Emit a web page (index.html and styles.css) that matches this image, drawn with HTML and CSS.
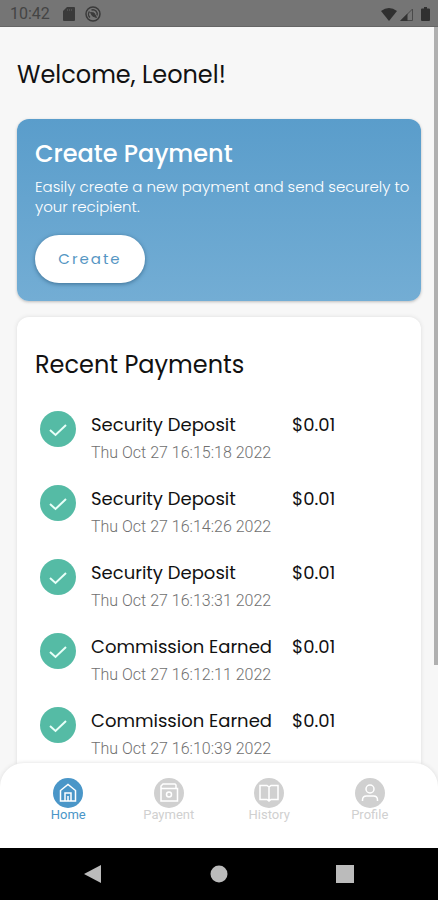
FILE: index.html
```html
<!DOCTYPE html>
<html lang="en">
<head>
<meta charset="utf-8">
<meta name="viewport" content="width=device-width, initial-scale=1">
<title>Home</title>
<link rel="stylesheet" href="styles.css">
</head>
<body>
<div class="app">
  <header class="status">
    <span class="status-time">10:42</span>
    <svg class="sd" width="12" height="14" viewBox="0 0 12 14"><path fill="#3a3a3a" d="M4 0h7a1 1 0 0 1 1 1v12a1 1 0 0 1-1 1H1a1 1 0 0 1-1-1V4z"/><path stroke="#505050" d="M4.500 2v2M6.500 2v2M8.500 2v2"/></svg>
    <svg class="sync" width="16" height="16" viewBox="0 0 16 16" fill="none" stroke="#3a3a3a"><circle cx="8" cy="8" r="7" stroke-width="1.500"/><path stroke-width="1.400" d="M5 11.500a4.300 4.300 0 0 1-.5-6M6.500 4a4.300 4.300 0 0 1 5.500 5.500"/><path fill="#3a3a3a" d="M5.500 6.500L9 7l2.500 4.500L7.500 10z"/></svg>
    <svg class="wifi" width="16" height="13" viewBox="0 0 16 13"><path fill="#303030" d="M0 3Q8-3 16 3L8 13z"/></svg>
    <svg class="cell" width="13" height="13" viewBox="0 0 13 13"><path fill="none" stroke="#4a4a4a" d="M1 12.500L12.500 1v11.500z"/><path fill="#333" d="M0 13l7.500-7.500V13z"/></svg>
    <svg class="battery" width="9" height="14" viewBox="0 0 9 14"><path fill="#303030" d="M3 0h3v1.500h2a1 1 0 0 1 1 1V13a1 1 0 0 1-1 1H1a1 1 0 0 1-1-1V2.500a1 1 0 0 1 1-1h2z"/></svg>
  </header>

  <main class="content">
    <h1 class="welcome">Welcome, Leonel!</h1>
    <section class="create">
      <h2 class="create-title">Create Payment</h2>
      <p class="create-text">Easily create a new payment and send securely to your recipient.</p>
      <button class="create-button" type="button">Create</button>
    </section>
    <section class="recent">
      <h2 class="recent-title">Recent Payments</h2>
      <ul class="payments">
        <li class="payment">
          <svg class="check" viewBox="0 0 36 36"><circle cx="18" cy="18" r="18"/><path d="M10 19l5.500 5L26 14"/></svg>
          <div><h3 class="name">Security Deposit</h3><time class="date">Thu Oct 27 16:15:18 2022</time></div>
          <span class="amount">$0.01</span>
        </li>
        <li class="payment">
          <svg class="check" viewBox="0 0 36 36"><circle cx="18" cy="18" r="18"/><path d="M10 19l5.500 5L26 14"/></svg>
          <div><h3 class="name">Security Deposit</h3><time class="date">Thu Oct 27 16:14:26 2022</time></div>
          <span class="amount">$0.01</span>
        </li>
        <li class="payment">
          <svg class="check" viewBox="0 0 36 36"><circle cx="18" cy="18" r="18"/><path d="M10 19l5.500 5L26 14"/></svg>
          <div><h3 class="name">Security Deposit</h3><time class="date">Thu Oct 27 16:13:31 2022</time></div>
          <span class="amount">$0.01</span>
        </li>
        <li class="payment">
          <svg class="check" viewBox="0 0 36 36"><circle cx="18" cy="18" r="18"/><path d="M10 19l5.500 5L26 14"/></svg>
          <div><h3 class="name">Commission Earned</h3><time class="date">Thu Oct 27 16:12:11 2022</time></div>
          <span class="amount">$0.01</span>
        </li>
        <li class="payment">
          <svg class="check" viewBox="0 0 36 36"><circle cx="18" cy="18" r="18"/><path d="M10 19l5.500 5L26 14"/></svg>
          <div><h3 class="name">Commission Earned</h3><time class="date">Thu Oct 27 16:10:39 2022</time></div>
          <span class="amount">$0.01</span>
        </li>
      </ul>
    </section>
    <div class="scroll-thumb"></div>
  </main>

  <nav class="tabs">
    <a class="tab tab-active" href="#home">
      <svg class="tab-icon" viewBox="0 0 30 30"><circle cx="15" cy="15" r="15"/><path d="M7.500 12.500L15 6.500l7.500 6V23h-15zM12 23v-8h6v8M15 18v5"/></svg>
      Home
    </a>
    <a class="tab" href="#payment">
      <svg class="tab-icon" viewBox="0 0 30 30"><circle cx="15" cy="15" r="15"/><path d="M7 10.500h16.500v12.500H7zM7 10.500V8l2-2h12l1 1v3.500"/><circle class="line" cx="15" cy="16.500" r="2.500"/></svg>
      Payment
    </a>
    <a class="tab" href="#history">
      <svg class="tab-icon" viewBox="0 0 30 30"><circle cx="15" cy="15" r="15"/><path d="M15 9l-2-1.500H6v14h7l2 1.500 2-1.500h7v-14h-7zM15 9v14"/></svg>
      History
    </a>
    <a class="tab" href="#profile">
      <svg class="tab-icon" viewBox="0 0 30 30"><circle cx="15" cy="15" r="15"/><circle class="line" cx="15" cy="11" r="4"/><path d="M7.500 23v-1q0-4 4-4h7q4 0 4 4v1"/></svg>
      Profile
    </a>
  </nav>

  <footer class="system">
    <button class="key" type="button" aria-label="Back"><svg width="18" height="18" viewBox="0 0 18 18"><path d="M17 0v18L0 9z"/></svg></button>
    <button class="key" type="button" aria-label="Home"><svg width="18" height="18" viewBox="0 0 18 18"><circle cx="9" cy="9" r="8.500"/></svg></button>
    <button class="key" type="button" aria-label="Overview"><svg width="18" height="18" viewBox="0 0 18 18"><path d="M0 0h18v18H0z"/></svg></button>
  </footer>
</div>
</body>
</html>
```
FILE: styles.css
```css
* { box-sizing: border-box; }
body { margin: 0; background: #f7f7f7; color: #111; font-family: Poppins, Inter, sans-serif; }
h1, h2, h3, p, ul { margin: 0; padding: 0; font-weight: 400; }
ul { list-style: none; }
svg { display: block; flex: none; }

.app { display: flex; flex-direction: column; height: 100vh; }

.status { display: flex; align-items: center; flex: none; height: 27px; padding: 2px 8px 0 10px; background: #757575; border-bottom: 1px solid #666; }
.status-time { font: 16px/20px Roboto, sans-serif; color: #444; }
.sd { margin-left: 13px; }
.sync { margin-left: 10px; }
.wifi { margin-left: auto; }
.cell { margin-left: 3px; }
.battery { margin-left: 8px; }

.content { position: relative; flex: 1; min-height: 0; overflow: hidden; padding: 32px 17px 0; }
.scroll-thumb { position: absolute; top: 0; right: 0; width: 4px; height: 84%; background: #b0b0b0; }
.welcome { font-size: 24px; line-height: 32px; }

.create { margin-top: 28px; padding: 20px 8px 18px 18px; border-radius: 12px; background: linear-gradient(#5a9dcb, #73add4); box-shadow: 0 1px 3px #bbb; color: #fff; }
.create-title { font-size: 24px; line-height: 30px; font-weight: 500; }
.create-text { margin-top: 8px; font-size: 15px; line-height: 20px; font-weight: 300; }
.create-button { display: block; margin-top: 18px; width: 110px; height: 48px; padding: 0; border: 0; border-radius: 24px; background: #fff; box-shadow: 0 1px 4px #3c6f93; color: #5596c3; font: 15px/24px Poppins, Inter, sans-serif; letter-spacing: 2px; }

.recent { margin-top: 16px; padding: 32px 18px; border-radius: 12px; background: #fff; box-shadow: 0 0 4px #ddd; }
.recent-title { font-size: 24px; line-height: 32px; }
.payments { margin-top: 30px; }
.payment { display: grid; grid-template-columns: 56px 201px auto; height: 74px; }
.check { width: 36px; height: 36px; margin-left: 5px; fill: #55bba5; }
.check path { fill: none; stroke: #e8fff8; stroke-width: 2; }
.name, .amount { font-size: 18px; line-height: 28px; }
.date { display: block; margin-top: 4px; color: #707070; font: 300 16px/20px Roboto, sans-serif; }

.tabs { position: relative; display: flex; flex: none; height: 85px; margin-top: -24px; padding: 15px 18px 0; border-radius: 24px 24px 0 0; background: #fff; box-shadow: 0 0 4px #ddd; }
.tab { display: flex; flex: 1; flex-direction: column; align-items: center; color: #d0d0d0; font: 13px/14px Roboto, sans-serif; text-decoration: none; }
.tab-active { color: #4a96c8; }
.tab-icon { width: 30px; height: 30px; fill: currentColor; }
.tab-icon path, .tab-icon .line { fill: none; stroke: #fff; stroke-width: 1.500; }

.system { position: relative; display: flex; justify-content: center; gap: 90px; flex: none; height: 52px; background: #000; }
.key { display: grid; place-items: center; width: 36px; padding: 0; border: 0; background: none; fill: #bbb; }
```
